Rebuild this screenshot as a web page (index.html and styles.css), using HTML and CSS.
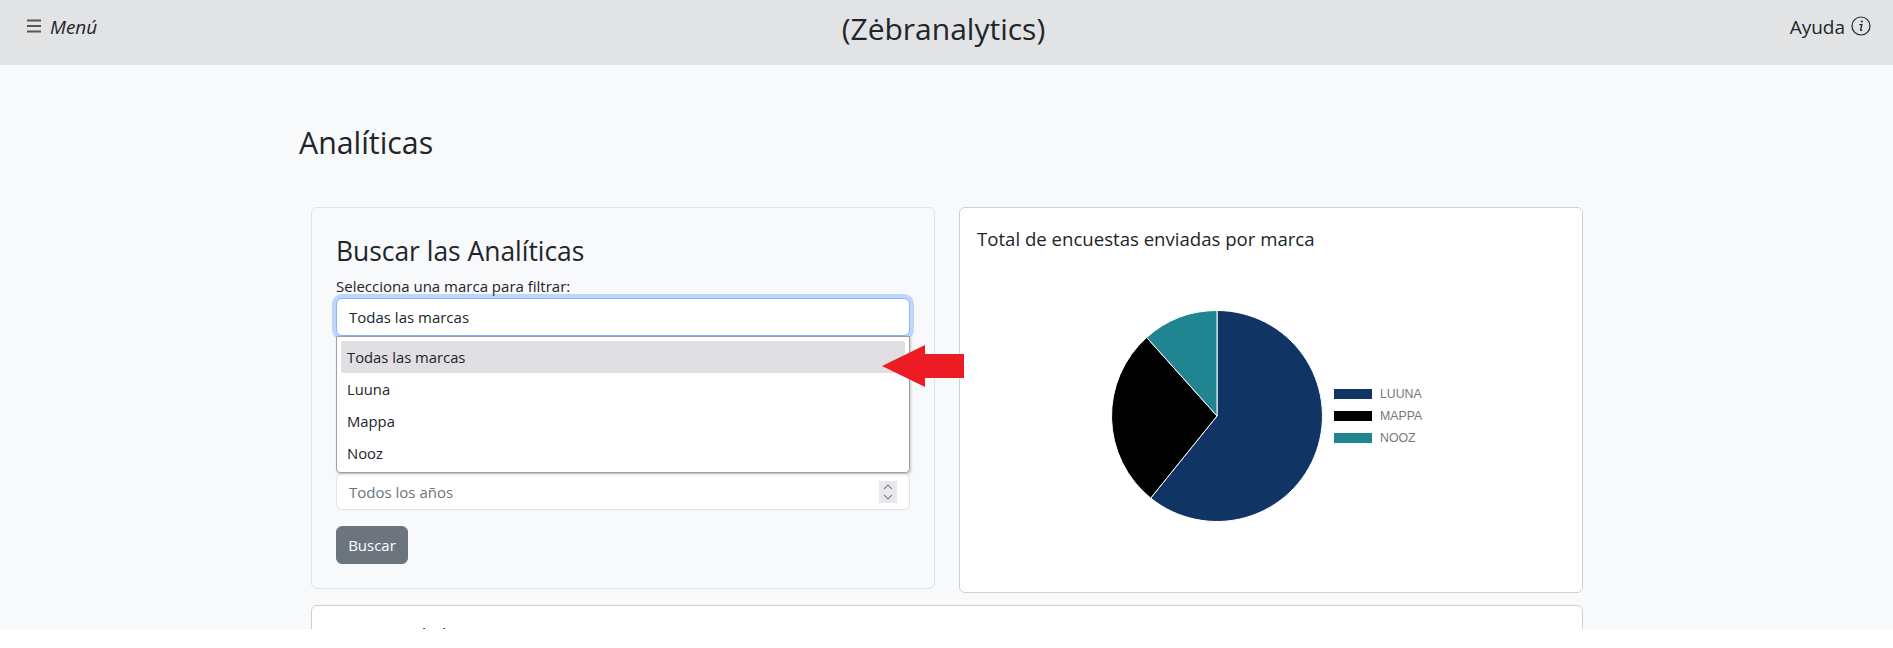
FILE: index.html
```html
<!DOCTYPE html>
<html lang="es">
<head>
    <meta charset="UTF-8">
    <meta name="viewport" content="width=device-width, initial-scale=1.0">
    <title>Zebranalytics</title>
    <link rel="stylesheet" href="styles.css">
</head>
<body>
    <div class="page">
        <nav class="navbar">
            <a class="nav-menu">
                <svg class="icon-menu" viewBox="0 0 16 16" width="16" height="16"><path d="M1 2.5h14M1 8h14M1 13.5h14" stroke="#555" stroke-width="2" fill="none"/></svg>
                <em>Menú</em>
            </a>
            <div class="nav-title">(Zėbranalytics)</div>
            <a class="nav-help">
                Ayuda
                <svg class="icon-info" viewBox="0 0 20 20" width="20" height="20"><circle cx="10" cy="10" r="9" stroke="#212529" stroke-width="1.2" fill="none"/><path d="M8.4 8.6h2.4l-1.2 5.2c-.1.5.2.7.6.6l1-.4" stroke="#212529" stroke-width="1.3" fill="none"/><circle cx="10.8" cy="5.6" r="1" fill="#212529"/></svg>
            </a>
        </nav>

        <main class="content">
            <h1 class="page-title">Analíticas</h1>

            <div class="cards">
                <section class="card card-search">
                    <h2>Buscar las Analíticas</h2>
                    <label class="field-label">Selecciona una marca para filtrar:</label>
                    <div class="select-wrap">
                        <div class="select select-focus">Todas las marcas</div>
                        <ul class="dropdown">
                            <li class="active">Todas las marcas</li>
                            <li>Luuna</li>
                            <li>Mappa</li>
                            <li>Nooz</li>
                        </ul>
                    </div>
                    <div class="select select-year">
                        Todos los años
                        <svg class="spinner" viewBox="0 0 18 22" width="18" height="22"><rect width="18" height="22" fill="#e9e9ed"/><path d="M5 8l4-4 4 4M5 14l4 4 4-4" stroke="#8a8a8a" stroke-width="1.2" fill="none"/></svg>
                    </div>
                    <button class="btn-search">Buscar</button>
                </section>

                <section class="card card-chart">
                    <h3>Total de encuestas enviadas por marca</h3>
                    <div class="chart">
                        <svg class="pie" viewBox="0 0 214 214" width="214" height="214">
                            <path d="M107 107V1.5A105.5 105.5 0 1 1 40.7 189.1Z" fill="#103463" stroke="#fff" stroke-width="1"/>
                            <path d="M107 107L40.7 189.1A105.5 105.5 0 0 1 36.7 28.4Z" fill="#000" stroke="#fff" stroke-width="1"/>
                            <path d="M107 107L36.7 28.4A105.5 105.5 0 0 1 107 1.5Z" fill="#218491" stroke="#fff" stroke-width="1"/>
                        </svg>
                        <ul class="legend">
                            <li><span class="swatch swatch-luuna"></span>LUUNA</li>
                            <li><span class="swatch swatch-mappa"></span>MAPPA</li>
                            <li><span class="swatch swatch-nooz"></span>NOOZ</li>
                        </ul>
                    </div>
                </section>

                <section class="card card-wide">
                    <h3>Resumen de las encuestas por marca</h3>
                </section>
            </div>
        </main>
    </div>

    <!-- Flecha roja encima del desplegable -->
    <svg class="arrow" viewBox="0 0 82 42" width="82" height="42"><path d="M0 21L43 0V9H82V33H43V42Z" fill="#ed1c24"/></svg>
</body>
</html>
```

FILE: styles.css
```css
html, body {
    margin: 0;
    background: #fff;
}
body {
    font-family: "Open Sans", "Noto Sans", sans-serif;
    color: #212529;
    position: relative;
}
.page {
    height: 629px;
    overflow: hidden;
    background: #f8f9fa;
}
.navbar {
    height: 65px;
    background: #e2e3e5;
    display: flex;
    justify-content: space-between;
    padding: 9px 22px 0 26px;
    box-sizing: border-box;
}
.nav-menu {
    display: flex;
    align-items: flex-start;
    gap: 8px;
    font-size: 19px;
    line-height: 36px;
}
.icon-menu {
    margin-top: 9px;
}
.nav-title {
    font-size: 30px;
    line-height: 40px;
}
.nav-help {
    display: flex;
    align-items: flex-start;
    gap: 6px;
    font-size: 19px;
    line-height: 36px;
}
.icon-info {
    margin-top: 7px;
}
.content {
    padding: 58px 311px 0;
}
.page-title {
    margin: 0 0 0 -12px;
    font-size: 30.3px;
    font-weight: 400;
    line-height: 40px;
}
.cards {
    display: grid;
    grid-template-columns: 624px 624px;
    column-gap: 24px;
    row-gap: 12px;
    margin-top: 44px;
    align-items: start;
}
.card {
    box-sizing: border-box;
    border: 1px solid #ced0d2;
    border-radius: 6px;
    background: #fff;
}
.card-search {
    height: 382px;
    padding: 25px 24px 0;
    background: #f8f9fa;
    border-color: #dee2e6;
}
.card-search h2 {
    margin: 0;
    font-size: 26.4px;
    font-weight: 400;
    line-height: 36px;
}
.field-label {
    display: block;
    margin-top: 5px;
    font-size: 15px;
    line-height: 24px;
}
.select-wrap {
    position: relative;
}
.select {
    box-sizing: border-box;
    height: 38px;
    padding: 6px 12px;
    font-size: 15px;
    line-height: 24px;
    background: #fff;
    border: 1px solid #dee2e6;
    border-radius: 6px;
}
.select-focus {
    border-color: #86b7fe;
    box-shadow: 0 0 0 4px rgba(13, 110, 253, .25);
}
.dropdown {
    position: absolute;
    top: 38px;
    left: 0;
    right: 0;
    z-index: 5;
    box-sizing: border-box;
    height: 137px;
    margin: 0;
    padding: 4px;
    list-style: none;
    background: #fff;
    border: 1px solid #a0a0a0;
    border-radius: 0 0 4px 4px;
    box-shadow: 1px 1px 3px rgba(0, 0, 0, .2);
    font-size: 14.8px;
}
.dropdown li {
    height: 32px;
    line-height: 32px;
    padding-left: 6px;
}
.dropdown li.active {
    background: #e0dfe4;
    border-radius: 2px;
}
.select-year {
    position: relative;
    margin-top: 137px;
    color: #6c757d;
    height: 37px;
}
.spinner {
    position: absolute;
    right: 12px;
    top: 7px;
}
.btn-search {
    display: block;
    box-sizing: border-box;
    height: 38px;
    width: 72px;
    margin-top: 16px;
    padding: 0;
    font-family: inherit;
    font-size: 15px;
    color: #fff;
    background: #6c757d;
    border: 1px solid #6c757d;
    border-radius: 6px;
}
.card-chart {
    height: 386px;
    padding: 17px 17px 0;
}
.card-chart h3, .card-wide h3 {
    margin: 0;
    font-size: 18.6px;
    font-weight: 400;
    line-height: 28px;
}
.chart {
    display: flex;
    align-items: flex-start;
    margin: 56px 0 0 133px;
}
.legend {
    margin: 74px 0 0 9px;
    padding: 0;
    list-style: none;
    font-family: "Liberation Sans", Arial, sans-serif;
    font-size: 12.3px;
    color: #777;
}
.legend li {
    display: flex;
    align-items: center;
    gap: 7px;
    height: 22px;
}
.swatch {
    box-sizing: border-box;
    display: block;
    width: 40px;
    height: 12px;
    border: 1px solid #fff;
}
.swatch-luuna {
    background: #103463;
}
.swatch-mappa {
    background: #000;
}
.swatch-nooz {
    background: #218491;
}
.card-wide {
    grid-column: 1 / 3;
    height: 300px;
    padding: 15px 17px;
}
.arrow {
    position: absolute;
    left: 882px;
    top: 345px;
    z-index: 10;
}
```
